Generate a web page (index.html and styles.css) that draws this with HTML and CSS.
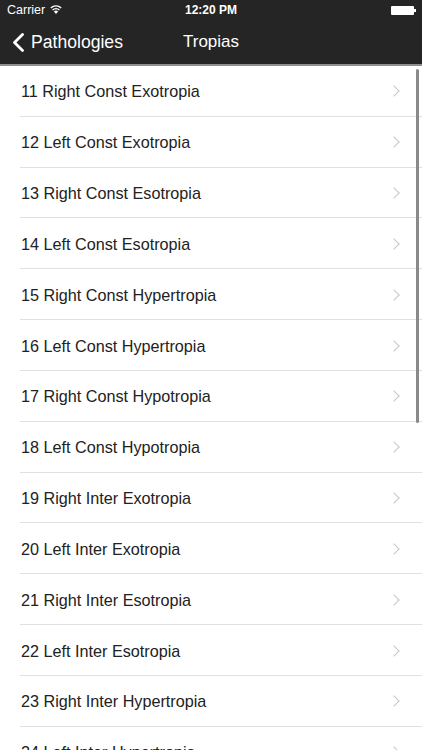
FILE: index.html
```html
<!DOCTYPE html>
<html lang="en">
<head>
<meta charset="UTF-8">
<meta name="viewport" content="width=device-width, initial-scale=1.0">
<title>Tropias</title>
<link rel="stylesheet" href="styles.css">
</head>
<body>
<div class="screen">
    <header class="topbar">
        <div class="status">
            <div class="status-left">
                <span>Carrier</span>
                <svg class="wifi" width="12" height="9" viewBox="0 0 12 9">
                    <path d="M6 9 L3.9 6.6 A3 3 0 0 1 8.1 6.6 Z" fill="#fff"/>
                    <path d="M2.6 5.1 A4.9 4.9 0 0 1 9.4 5.1" stroke="#fff" stroke-width="1.4" fill="none"/>
                    <path d="M0.8 3 A7.5 7.5 0 0 1 11.2 3" stroke="#fff" stroke-width="1.4" fill="none"/>
                </svg>
            </div>
            <div class="status-time">12:20 PM</div>
            <div class="status-right">
                <div class="battery"><div class="battery-tip"></div></div>
            </div>
        </div>
        <nav class="navbar">
            <a class="back" href="#">
                <svg width="13" height="19" viewBox="0 0 13 19">
                    <path d="M10.5 1.5 L2.5 9.5 L10.5 17.5" stroke="#fff" stroke-width="2.8" fill="none" stroke-linecap="round" stroke-linejoin="round"/>
                </svg>
                <span>Pathologies</span>
            </a>
            <div class="title">Tropias</div>
        </nav>
    </header>
    <div class="list-wrap">
        <ul class="list">
            <li><span>11 Right Const Exotropia</span><i class="chev"></i></li>
            <li><span>12 Left Const Exotropia</span><i class="chev"></i></li>
            <li><span>13 Right Const Esotropia</span><i class="chev"></i></li>
            <li><span>14 Left Const Esotropia</span><i class="chev"></i></li>
            <li><span>15 Right Const Hypertropia</span><i class="chev"></i></li>
            <li><span>16 Left Const Hypertropia</span><i class="chev"></i></li>
            <li><span>17 Right Const Hypotropia</span><i class="chev"></i></li>
            <li><span>18 Left Const Hypotropia</span><i class="chev"></i></li>
            <li><span>19 Right Inter Exotropia</span><i class="chev"></i></li>
            <li><span>20 Left Inter Exotropia</span><i class="chev"></i></li>
            <li><span>21 Right Inter Esotropia</span><i class="chev"></i></li>
            <li><span>22 Left Inter Esotropia</span><i class="chev"></i></li>
            <li><span>23 Right Inter Hypertropia</span><i class="chev"></i></li>
            <li><span>24 Left Inter Hypertropia</span><i class="chev"></i></li>
        </ul>
        <div class="scrollbar"></div>
    </div>
</div>
</body>
</html>
```

FILE: styles.css
```css
body {
    margin: 0;
    padding: 0;
    font-family: 'Liberation Sans', Arial, sans-serif;
    background-color: #fff;
}
.screen {
    width: 422px;
    height: 750px;
    overflow: hidden;
    display: flex;
    flex-direction: column;
}
.topbar {
    background-color: #252525;
    color: #fff;
    border-bottom: 2px solid #8f8f8f;
}
.status {
    height: 20px;
    display: flex;
    align-items: center;
    justify-content: space-between;
    padding: 0 6px 0 7px;
    font-size: 12.5px;
    position: relative;
}
.status-left {
    display: flex;
    align-items: center;
    gap: 5px;
}
.wifi {
    margin-top: -1px;
}
.status-time {
    position: absolute;
    left: 0;
    right: 0;
    text-align: center;
    font-weight: bold;
    font-size: 12px;
}
.status-right {
    display: flex;
    align-items: center;
}
.battery {
    width: 23px;
    height: 9px;
    background-color: #fff;
    border-radius: 1px;
    position: relative;
    margin-right: 2px;
}
.battery-tip {
    position: absolute;
    right: -2px;
    top: 3px;
    width: 2px;
    height: 3px;
    background-color: #fff;
}
.navbar {
    height: 44px;
    display: flex;
    align-items: center;
    position: relative;
}
.back {
    display: flex;
    align-items: center;
    gap: 6px;
    padding-left: 12px;
    color: #fff;
    text-decoration: none;
    font-size: 17.6px;
    z-index: 1;
}
.title {
    position: absolute;
    left: 0;
    right: 0;
    text-align: center;
    font-size: 17px;
}
.list-wrap {
    position: relative;
    flex: 1;
}
.list {
    list-style: none;
    margin: 0;
    padding: 0 0 0 20px;
}
.list li {
    height: 49.83px;
    display: flex;
    align-items: center;
    justify-content: space-between;
    border-bottom: 1px solid #e0e0e0;
    padding: 0 24px 0 1px;
    font-size: 16.2px;
    color: #222;
}
.list li span {
    margin-top: 2px;
}
.chev {
    width: 7px;
    height: 7px;
    border-top: 1.6px solid #c7c7cc;
    border-right: 1.6px solid #c7c7cc;
    transform: rotate(45deg);
    margin-top: 1px;
}
.scrollbar {
    position: absolute;
    top: 3px;
    right: 3px;
    width: 3px;
    height: 354px;
    border-radius: 2px;
    background-color: #8a8a8a;
}
```
